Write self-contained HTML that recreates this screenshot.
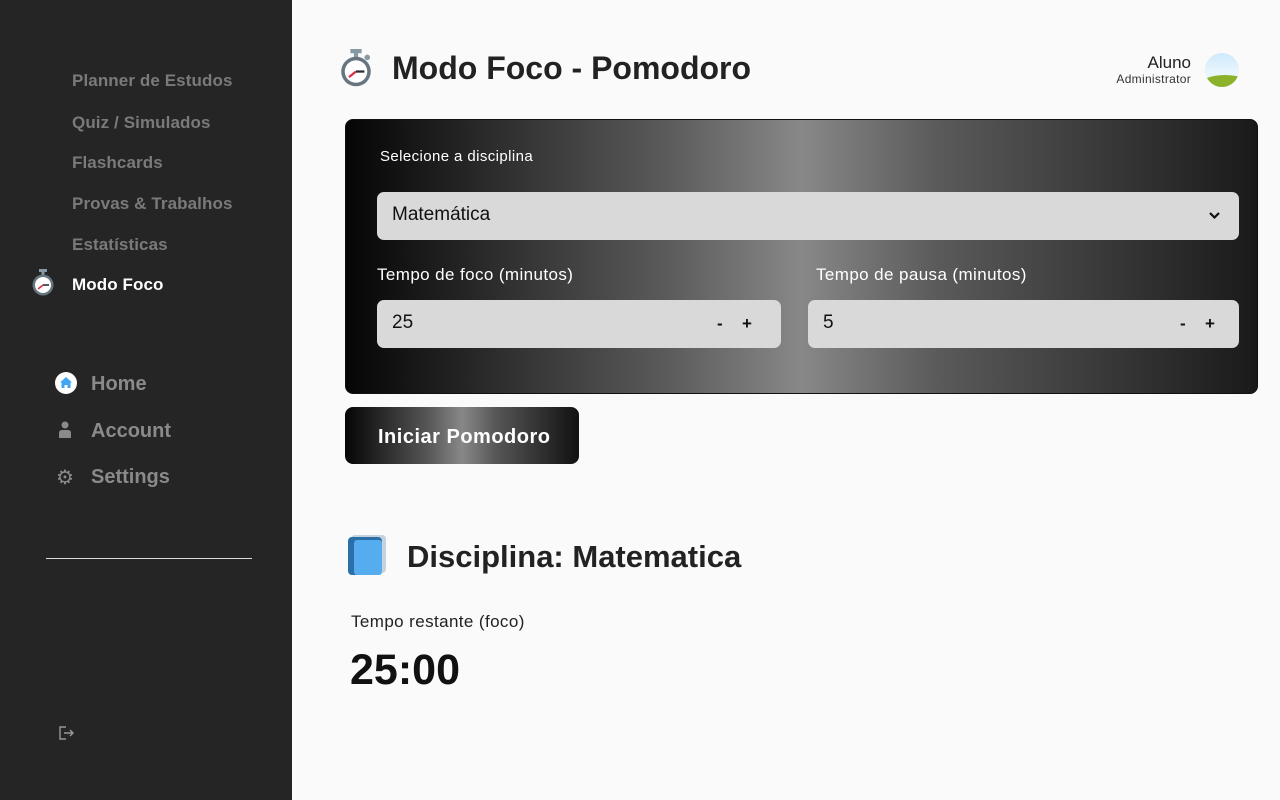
<!DOCTYPE html>
<html><head><meta charset="utf-8"><style>
*{margin:0;padding:0;box-sizing:border-box}
body{width:1280px;height:800px;background:#fafafa;font-family:"Liberation Sans",sans-serif;position:relative;overflow:hidden}
.sb{position:absolute;left:0;top:0;width:292px;height:800px;background:#252525}
.nav{position:absolute;left:72px;font-weight:bold;font-size:17px;color:#7a7a7a;letter-spacing:0.1px}
.nav2{position:absolute;left:91px;font-weight:bold;font-size:20px;color:#8a8a8a}
.abs{position:absolute}
.card{position:absolute;left:345px;top:119px;width:913px;height:275px;border-radius:8px;background:linear-gradient(90deg,#050505 0%,#5a5a5a 35%,#888 50%,#5a5a5a 65%,#1a1a1a 100%);border:1px solid #111}
.lbl{position:absolute;color:#fff;font-size:17px;letter-spacing:0.4px}
.inp{position:absolute;background:#d9d9d9;border-radius:7px;height:48px;font-size:19px;color:#111;padding:12px 15px}
.pm{position:absolute;top:14px;font-weight:bold;font-size:17px;color:#111}
</style></head><body>
<div class="sb">
<div class="nav" style="top:71px">Planner de Estudos</div>
<div class="nav" style="top:113px">Quiz / Simulados</div>
<div class="nav" style="top:153px">Flashcards</div>
<div class="nav" style="top:194px">Provas &amp; Trabalhos</div>
<div class="nav" style="top:235px">Estatísticas</div>
<svg class="abs" style="left:31px;top:269px" width="24" height="27" viewBox="0 0 24 27"><rect x="8" y="0" width="8" height="3" fill="#8899a6"/><rect x="10.5" y="2" width="3" height="4" fill="#8899a6"/><circle cx="12" cy="16" r="10.5" fill="#66757f"/><circle cx="12" cy="16" r="8" fill="#fff"/><line x1="12" y1="16" x2="7" y2="20" stroke="#dd2e44" stroke-width="1.6"/><line x1="12" y1="16" x2="18" y2="16" stroke="#292f33" stroke-width="1.6"/></svg>
<div class="nav" style="top:275px;color:#fff">Modo Foco</div>
<div class="abs" style="left:55px;top:372px;width:22px;height:22px;border-radius:50%;background:#fff"><svg width="22" height="22" viewBox="0 0 22 22"><path d="M11 5 L17 10.5 H15.5 V16 H12.5 V13 H9.5 V16 H6.5 V10.5 H5 Z" fill="#3ea6f2"/></svg></div>
<div class="nav2" style="top:373px">Home</div>
<svg class="abs" style="left:58px;top:421px" width="14" height="18" viewBox="0 0 14 18"><circle cx="7" cy="4" r="3.5" fill="#8a8a8a"/><path d="M1 17 V12 Q1 9 4 9 H10 Q13 9 13 12 V17 Z" fill="#8a8a8a"/></svg>
<div class="nav2" style="top:420px">Account</div>
<div class="abs" style="left:56px;top:465px;font-size:20px;color:#8a8a8a">⚙</div>
<div class="nav2" style="top:466px">Settings</div>
<div class="abs" style="left:46px;top:558px;width:206px;height:1px;background:#ddd"></div>
<svg class="abs" style="left:58px;top:725px" width="16" height="16" viewBox="0 0 16 16" fill="none" stroke="#999" stroke-width="1.4"><path d="M8 2 H2 V14 H8"/><path d="M6 8 H15 M12 5 L15 8 L12 11"/></svg>
</div>
<svg class="abs" style="left:339px;top:49px" width="34" height="38" viewBox="0 0 24 27"><rect x="8" y="0" width="8" height="3" fill="#8899a6"/><rect x="10.5" y="2" width="3" height="4" fill="#8899a6"/><circle cx="20" cy="6" r="2" fill="#8899a6"/><circle cx="12" cy="16" r="10.5" fill="#66757f"/><circle cx="12" cy="16" r="8" fill="#fff"/><line x1="12" y1="16" x2="7" y2="20" stroke="#dd2e44" stroke-width="1.6"/><line x1="12" y1="16" x2="18" y2="16" stroke="#292f33" stroke-width="1.6"/></svg>
<div class="abs" style="left:392px;top:50px;font-size:32px;font-weight:bold;color:#222">Modo Foco - Pomodoro</div>
<div class="abs" style="right:89px;top:53px;font-size:17px;color:#222;text-align:right">Aluno</div>
<div class="abs" style="right:89px;top:72px;font-size:12px;color:#333;text-align:right;letter-spacing:0.3px">Administrator</div>
<div class="abs" style="left:1205px;top:53px;width:34px;height:34px;border-radius:50%;overflow:hidden;background:linear-gradient(#cfe9fb,#eaf6fd 60%)"><div style="position:absolute;left:-5px;top:22px;width:50px;height:20px;border-radius:50%;background:#8bb22a"></div></div>
<div class="card">
<div class="lbl" style="left:34px;top:28px;font-size:15px">Selecione a disciplina</div>
<div class="inp" style="left:31px;top:72px;width:862px">Matemática<svg style="position:absolute;right:18px;top:19px" width="13" height="9" viewBox="0 0 13 9"><path d="M2 2 L6.5 6.5 L11 2" stroke="#111" stroke-width="2.2" fill="none"/></svg></div>
<div class="lbl" style="left:31px;top:145px">Tempo de foco (minutos)</div>
<div class="lbl" style="left:470px;top:145px">Tempo de pausa (minutos)</div>
<div class="inp" style="left:31px;top:180px;width:404px">25<span class="pm" style="left:340px">-</span><span class="pm" style="left:365px">+</span></div>
<div class="inp" style="left:462px;top:180px;width:431px">5<span class="pm" style="left:372px">-</span><span class="pm" style="left:397px">+</span></div>
</div>
<div class="abs" style="left:345px;top:407px;width:234px;height:57px;border-radius:8px;background:linear-gradient(90deg,#050505 0%,#555 35%,#888 50%,#555 65%,#111 100%);color:#fff;font-weight:bold;font-size:20px;letter-spacing:0.5px;padding-top:19px;padding-left:33px">Iniciar Pomodoro</div>
<svg class="abs" style="left:347px;top:534px" width="40" height="42" viewBox="0 0 40 42"><rect x="4" y="1" width="35" height="38" rx="4" fill="#c6d3dc"/><rect x="1" y="3" width="34" height="38" rx="4" fill="#2a6fa8"/><rect x="7" y="6" width="28" height="35" rx="3" fill="#55acee"/></svg>
<div class="abs" style="left:407px;top:539px;font-size:31px;font-weight:bold;color:#222">Disciplina: Matematica</div>
<div class="abs" style="left:351px;top:612px;font-size:17px;color:#222;letter-spacing:0.4px">Tempo restante (foco)</div>
<div class="abs" style="left:350px;top:646px;font-size:43px;font-weight:bold;color:#111">25:00</div>
</body></html>
